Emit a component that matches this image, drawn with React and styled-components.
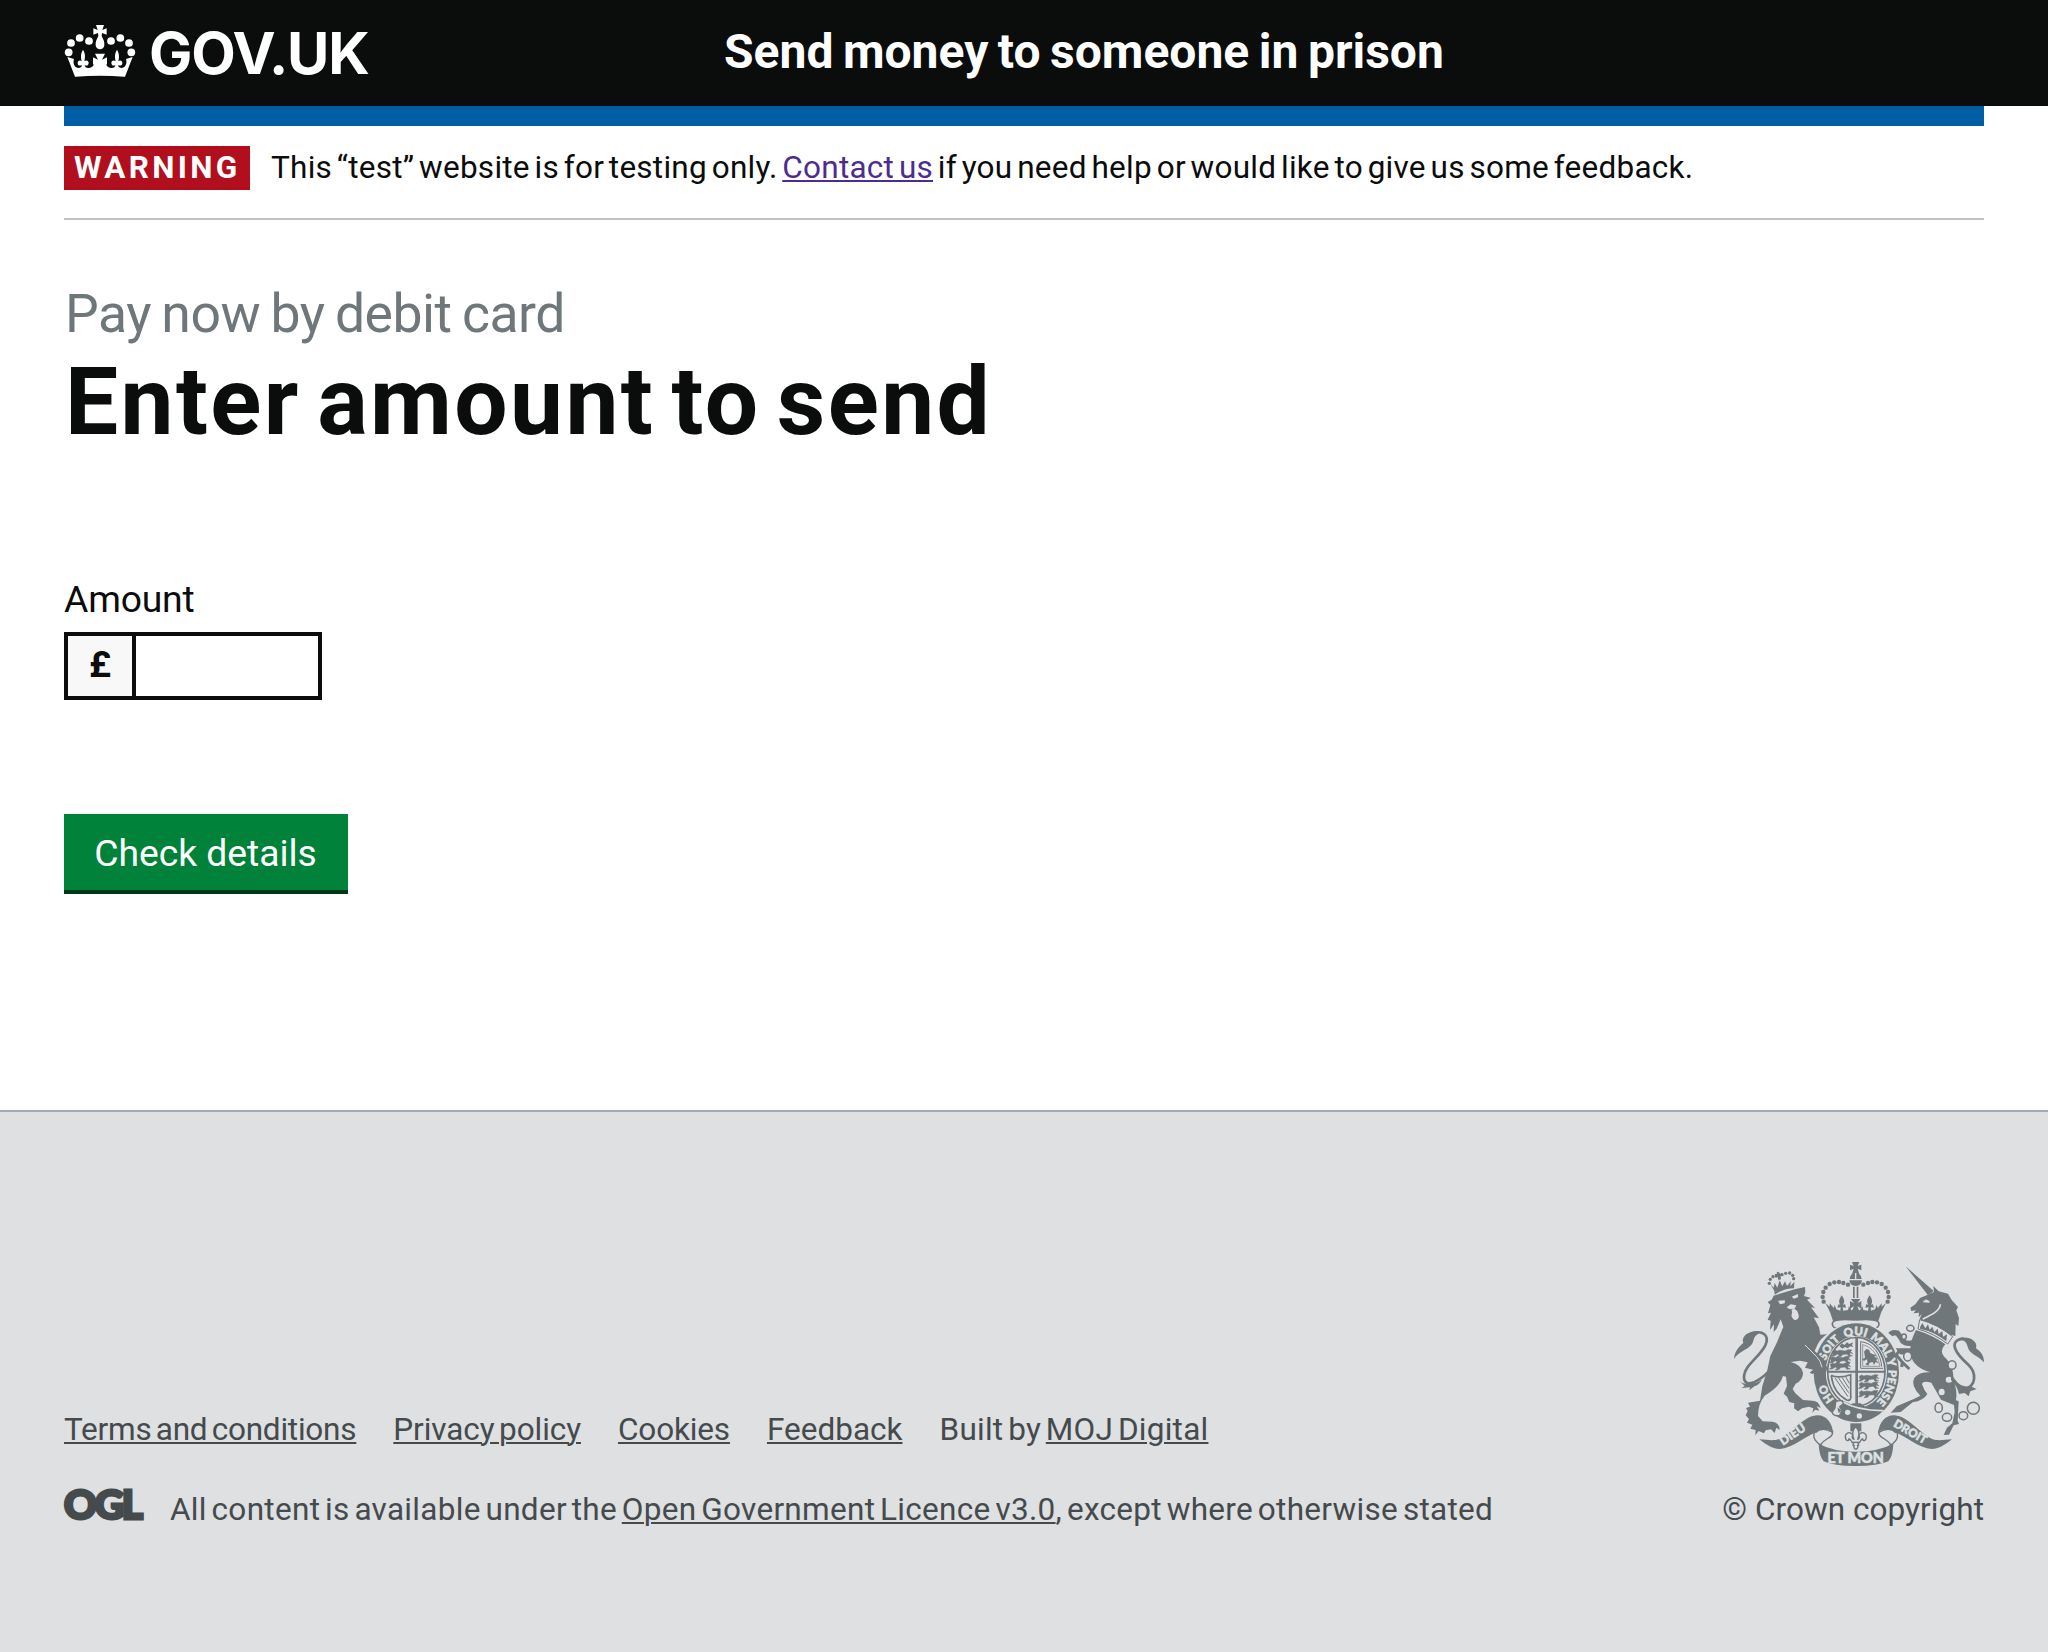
import React from 'react';
import styled, { createGlobalStyle } from 'styled-components';

const ink = '#0b0c0c';
const footerInk = '#454a4d';
const crestInk = '#6f777b';
const footerBg = '#dee0e2';

const GlobalStyle = createGlobalStyle`
  *, *::before, *::after { box-sizing: border-box; }
  body {
    margin: 0;
    background: #fff;
    color: ${ink};
    font-family: Roboto, "Liberation Sans", sans-serif;
    font-kerning: normal;
  }
`;

const Page = styled.div`
  display: flex;
  flex-direction: column;
  height: 1652px;
  overflow: hidden;
`;

const Container = styled.div`
  margin: 0 64px;
`;

const Header = styled.header`
  display: flex;
  flex: none;
  height: 106px;
  padding: 21px 64px 0;
  background: ${ink};
  color: #fff;
`;

const HomeLink = styled.a`
  display: flex;
  align-items: flex-start;
  width: 660px;
  color: inherit;
  text-decoration: none;
`;

const CrownIcon = styled.svg`
  width: 72px;
  height: 53px;
  margin-top: 3px;
`;

const LogoType = styled.span`
  margin-left: 13px;
  font: 700 57.8px/64px Inter, "Liberation Sans", sans-serif;
  letter-spacing: -1.1px;
`;

const ServiceName = styled.span`
  font-size: 48px;
  font-weight: 700;
  line-height: 61px;
  letter-spacing: 0;
  word-spacing: -2.4px;
`;

const BlueBar = styled.div`
  height: 20px;
  background: #005ea5;
`;

const PhaseBanner = styled.div`
  display: flex;
  height: 94px;
  padding-top: 20px;
  border-bottom: 2px solid #bfc1c3;
`;

const PhaseTag = styled.strong`
  flex: none;
  width: 186px;
  height: 44px;
  padding-left: 10px;
  background: #b10e1e;
  color: #fff;
  font-size: 31.5px;
  line-height: 44px;
  letter-spacing: 3.3px;
`;

const PhaseText = styled.p`
  margin: 0 0 0 21px;
  font-size: 31.5px;
  line-height: 44px;
  letter-spacing: 0.25px;
  word-spacing: -3.3px;
`;

const TextLink = styled.a`
  color: ${(p) => p.$color || 'inherit'};
  text-decoration: underline;
  text-decoration-thickness: 2px;
  text-underline-offset: 2px;
`;

const Heading = styled.h1`
  display: flex;
  flex-direction: column;
  margin: 64px 0 0;
  padding-left: 1px;
  font-size: 94.5px;
  font-weight: 700;
  line-height: 100px;
  letter-spacing: 2.4px;
  word-spacing: -9.5px;
`;

const Caption = styled.span`
  margin-bottom: 8px;
  color: #6f777b;
  font-size: 53.5px;
  font-weight: 400;
  line-height: 60px;
  letter-spacing: -0.5px;
  word-spacing: -2.4px;
`;

const Form = styled.form`
  display: flex;
  flex-direction: column;
  align-items: flex-start;
  margin-top: 122px;
`;

const Label = styled.label`
  margin-bottom: 8px;
  font-size: 37.3px;
  line-height: 50px;
  letter-spacing: -0.2px;
`;

const AmountField = styled.div`
  display: flex;
  width: 258px;
  height: 68px;
  border: 4px solid ${ink};
`;

const Prefix = styled.span`
  width: 68px;
  border-right: 4px solid ${ink};
  background: #f8f8f8;
  font-size: 37.3px;
  font-weight: 700;
  line-height: 57px;
  text-align: center;
`;

const AmountInput = styled.input`
  flex: 1;
  min-width: 0;
  border: 0;
  background: #fff;
  font: inherit;
`;

const SubmitButton = styled.button`
  width: 284px;
  height: 80px;
  margin-top: 114px;
  padding: 2px 1px 0 0;
  border: 0;
  border-bottom: 4px solid #003618;
  background: #00823b;
  color: #fff;
  font: 400 37.3px/74px Roboto, "Liberation Sans", sans-serif;
  letter-spacing: -0.05px;
`;

const Footer = styled.footer`
  display: flex;
  flex: 1;
  align-items: flex-end;
  justify-content: space-between;
  margin-top: 216px;
  padding: 0 64px 122px;
  border-top: 2px solid #a1acb2;
  background: ${footerBg};
  color: ${footerInk};
  font-size: 31.5px;
  line-height: 40px;
`;

const FooterLinks = styled.ul`
  display: flex;
  gap: 37px;
  margin: 0 0 40px;
  padding: 0;
  list-style: none;
`;

const FooterItem = styled.li`
  letter-spacing: ${(p) => p.$track}px;
  word-spacing: -3.3px;
  white-space: nowrap;
`;

const Licence = styled.div`
  display: flex;
`;

const OglMark = styled.span`
  width: 106px;
  margin-top: -6px;
  font: 900 40.5px/40px Lato, "Liberation Sans", sans-serif;
  letter-spacing: -2.2px;
  -webkit-text-stroke: 3px ${footerInk};
`;

const LicenceText = styled.span`
  letter-spacing: 0.3px;
  word-spacing: -3.3px;
`;

const Copyright = styled.a`
  display: flex;
  flex-direction: column;
  align-items: flex-end;
  gap: 24px;
  letter-spacing: 0.05px;
`;

const CrestArt = styled.svg`
  width: 250px;
  height: 204px;
  overflow: visible;
`;

const CrestWord = styled.text`
  fill: ${footerBg};
  stroke: ${footerBg};
  stroke-width: 1.6px;
  font-family: Lato, "Liberation Sans", sans-serif;
  font-weight: 900;
  font-size: ${(p) => p.$size}px;
`;

const crownHalf =
  'M132 180 H57 L34 121 L54 127 C50 140 55 152 66 154 C74 154 79 150 77 145 C72 149 64 146 65 138 C66 131 73 129 77 134 C74 120 74 111 81 99 C88 111 88 120 85 134 C89 129 97 131 98 138 C98 146 91 149 86 145 C86 151 91 155 99 154 C108 153 113 148 113 143 L111 143 V122 L126 129 L117 111 H132 Z';

function Crown() {
  return (
    <CrownIcon viewBox="24 22 216 159" fill="#fff" aria-hidden="true">
      {[[38, 107], [45, 79], [71, 64], [99, 73], [165, 73], [193, 64], [219, 79], [226, 107]].map(([x, y]) => (
        <circle key={x} cx={x} cy={y} r="11.6" />
      ))}
      <path d="M120 25 H144 L139 40 L152 35 V54 L138 49 L137 58 C142 68 146 76 145 85 A13 13 0 0 1 119 85 C118 76 122 68 127 58 L126 49 L112 54 V35 L125 40 Z" />
      <path d={crownHalf} />
      <path d={crownHalf} transform="translate(264 0) scale(-1 1)" />
      <path d="M59 181 Q132 173 205 181 Z" fill={ink} />
    </CrownIcon>
  );
}

const beads = [[444, 134], [430, 129], [417, 126], [403, 127], [389, 132], [377, 143], [370, 156], [368, 171], [371, 185]];

function CrownSide() {
  return (
    <g>
      {beads.map(([x, y]) => (
        <circle key={x} cx={x} cy={y} r="6.6" />
      ))}
      <path d="M468 240 Q430 238 399 243 Q392 215 376 189 L389 200 L389 190 L401 204 L404 195 L409 208 L421 212 L422 202 L412 203 L416 192 L421 195 C414 184 419 176 425 166 C432 176 436 184 429 195 L435 192 L438 203 L428 202 L430 212 L444 210 L447 198 L454 211 H468 Z" />
      <path d="M453 177 H468 V213 H456 L462 199 L450 206 V183 L462 190 Z" />
      <path d="M459 140 h5 v34 h-5z" />
      <path d="M467 240 C420 236 396 240 397 252 C398 260 403 264 410 265" fill="none" stroke={crestInk} strokeWidth="5" />
    </g>
  );
}

function RibbonSide() {
  return (
    <g>
      <path d="M178 598 C205 600 222 603 238 597 C279 576 309 530 350 526 C381 525 396 550 399 576 C388 567 366 560 344 578 C312 594 289 612 262 622 C232 634 212 624 178 598 Z" />
      <g fill="none" stroke={crestInk} strokeWidth="4">
        <path d="M344 576 C335 594 350 609 366 617" />
        <path d="M398 572 C401 596 373 593 362 614" />
        <path d="M346 578 C360 564 378 565 398 577" />
      </g>
    </g>
  );
}

function Fleur() {
  return (
    <g fill={footerBg} stroke={crestInk} strokeWidth="4" strokeLinejoin="round">
      <path d="M451 550 h33 v24 h-33z" fill={crestInk} stroke="none" />
      <path d="M467 560 C455 574 457 584 462 598 C458 598 455 592 458 584 C446 570 431 584 438 598 C441 604 448 603 446 597 C455 596 452 608 461 610 L459 616 L463 617 A6 6 0 1 0 472 617 L476 616 L474 610 C483 608 480 596 489 597 C487 603 494 604 497 598 C504 584 489 570 477 584 C480 592 477 598 473 598 C478 584 480 574 467 560 Z" />
      <path d="M456 607 h23" />
    </g>
  );
}

const miniLion = 'M0 4 l5 -4 6 3 6 -2 12 2 8 -4 8 1 -3 4 5 6 -6 -3 -1 6 6 3 -8 1 -4 -6 -10 1 -4 6 -9 1 5 -5 -4 -3 -7 5 -7 1 4 -5 z';

function Garter() {
  return (
    <g>
      <ellipse cx="469" cy="398" rx="132" ry="152" fill={footerBg} />
      <ellipse cx="469" cy="398" rx="128" ry="148" />
      <ellipse cx="469" cy="396" rx="92" ry="108" fill={footerBg} />
      <ellipse cx="469" cy="395" rx="86" ry="103" fill="none" stroke={crestInk} strokeWidth="5" />
      <path d="M466 292 h8 v205 h-8z M383 392 h172 v6 h-172z" />
      {[[397, 330], [391, 350], [391, 369], [478, 405], [478, 427], [478, 452]].map(([x, y], i) => (
        <g key={i} transform={`translate(${x} ${y}) scale(${i < 3 ? 1.3 : 1.25} 1.1)`}>
          <path d={miniLion} stroke={crestInk} strokeWidth="1.5" />
        </g>
      ))}
      <path d="M418 318 l8 -8 7 5 8 -8 7 5 11 -5 -3 8 4 6 -9 -2 -8 6 -8 -4 -8 5z" />
      <g fill="none" stroke={crestInk}>
        <path d="M482 305 V385 H549 M482 305 C520 308 543 345 545 380" strokeWidth="3" />
        <path d="M488 314 V379 H540 C534 346 518 322 488 314" strokeWidth="2" />
        <path d="M393 406 C405 412 428 412 452 404 V466 M394 408 C398 440 414 466 440 480 C450 484 455 475 452 464" strokeWidth="5" />
        <path d="M405 414 L444 470 M415 413 L446 458 M426 412 L447 445 M437 410 L448 430" strokeWidth="3" />
      </g>
      <path d="M492 335 l7 -8 9 3 2 8 9 5 10 2 -6 6 10 3 -4 7 8 10 -10 -5 -5 9 -4 -9 -9 2 -4 9 -9 -4 7 -7 -3 -8 -8 5 -6 -5 9 -5 -1 -8z" />
      <path d="M458 490 H482 L496 502 L446 499 Z" />
      <path d="M398 486 L424 481 Q470 504 545 507 L540 520 Q500 552 445 540 L398 524 Z" />
      <path id="garterPath" d="M373 398 A96 112 0 0 1 565 398 A96 112 0 0 1 373 398" fill="none" />
      {[['SOIT', 36], ['QUI', 128], ['MAL', 205], ['Y', 287], ['PENSE', 319], ['HO', 566]].map(([word, offset]) => (
        <CrestWord key={word} $size={word.length > 3 || word === 'HO' ? 33.5 : 35}>
          <textPath href="#garterPath" startOffset={offset}>{word}</textPath>
        </CrestWord>
      ))}
      <path d="M424 484 Q475 513 550 512" fill="none" stroke={footerBg} strokeWidth="5" />
      <path d="M407 485 Q432 476 429 492 L419 500 L426 511 L419 526 Q398 530 397 516 L405 504 Z" fill={footerBg} stroke={crestInk} strokeWidth="4" />
      <path d="M412 502 L424 511 L416 520 Z" />
      <circle cx="443" cy="517" r="8" fill={footerBg} />
      <circle cx="478" cy="528" r="8" fill={footerBg} />
    </g>
  );
}

function Lion() {
  return (
    <g>
      <path d="M223 153 L211 132 L221 143 L224 129 L232 143 L239 121 L247 139 L255 124 L261 138 L273 123 L270 139 L283 126 L282 145 Q252 145 224 164 Z" />
      {[[208, 130], [211, 118], [219, 110], [229, 108], [246, 104], [257, 100], [269, 99], [278, 106], [281, 116]].map(([x, y]) => (
        <circle key={x} cx={x} cy={y} r="5" />
      ))}
      <path d="M231 95 l6 2 3 5 5 -3 3 7 -6 2 1 10 -8 2 -2 -11 -7 1 -2 -7 6 -1z" />
      <path d="M203 186 L215 179 L221 167 L287 147 L315 141 L316 157 L312 168 L333 174 L321 179 L345 204 L333 202 L357 235 L341 232 L357 262 L361 284 L381 283 Q363 294 352 315 L344 333 L367 353 L382 384 L377 400 L374 422 L366 411 L352 423 L356 409 L343 412 L349 397 L337 402 L329 398 L339 389 L315 383 L323 367 L300 362 L272 366 Q305 375 309 398 Q310 420 287 431 L278 447 L286 460 L309 480 L337 482 Q356 482 362 504 L350 498 L358 512 L345 509 L337 519 L340 505 L327 500 L306 505 L294 514 L282 505 L283 490 L268 486 L261 470 L251 461 L261 438 L258 410 L249 408 Q241 439 194 467 Q174 491 174 528 L188 544 L218 545 Q239 549 239 570 L229 563 L224 579 L213 568 L197 571 L192 580 L176 573 L166 586 L167 570 L151 566 L157 554 L141 548 L147 537 L137 526 L143 513 L138 504 L150 500 L144 488 L180 482 L187 438 L202 390 L211 348 L231 307 L250 260 L242 238 L230 266 L221 276 L222 253 L210 270 L212 242 L203 239 L213 218 L204 220 L211 195 Z" />
      <g fill={footerBg}>
        <path d="M234 182 L255 181 L254 190 L240 193 Z M275 170 L294 162 L294 172 L282 176 Z M260 202 L272 193 L289 196 L284 206 L268 207 Z M274 209 C282 203 294 209 296 226 C299 239 283 246 277 233 C270 223 281 220 274 209 Z" />
      </g>
      <path d="M315 315 L350 350 Q362 362 366 382" fill="none" stroke={footerBg} strokeWidth="3" />
      <path d="M154 281 C190 268 209 288 196 316 C178 352 134 376 132 408 C130 443 166 434 206 395" fill="none" stroke={crestInk} strokeWidth="8" />
      <path d="M175 273 C140 272 123 293 130 309 C115 320 103 338 102 357 C115 335 140 331 153 316 C164 304 158 289 175 282 Z M119 423 Q132 436 147 429 Q168 434 187 417 Q176 437 163 439 L148 451 L150 442 L124 444 L134 438 Z" />
    </g>
  );
}

function Unicorn() {
  const ring = { fill: footerBg, stroke: crestInk, strokeWidth: 4.5 };
  return (
    <g>
      <path d="M617 79 L701 153 L684 166 Z" />
      <path d="M684 164 L702 155 L700 138 L716 154 L744 161 L755 180 L774 201 L769 211 L777 234 L775 258 L767 252 L766 288 L750 284 L659 237 L665 222 L656 232 L657 218 L640 220 L648 211 L634 213 L631 203 L646 193 L660 174 Z" />
      <path d="M721 193 C720 214 691 226 668 237 M670 184 L688 186 L676 180" fill="none" stroke={footerBg} strokeWidth="5" />
      <path d="M659 239 Q712 252 758 290 L743 312 Q703 281 654 267 Z" fill={footerBg} stroke={crestInk} strokeWidth="3" />
      <path d="M660 262 L667 249 L676 265 L684 253 L689 269 L697 260 L703 276 L713 266 L716 282 L727 273 L729 290 L741 283 L739 304 Q705 276 660 266 Z" />
      <path d="M648 270 Q700 286 736 313 Q714 337 739 356 Q762 377 760 422 Q773 449 768 481 L776 484 L773 542 L777 552 L761 556 L747 584 L731 585 L741 563 L757 550 L764 517 L762 495 L723 479 L694 428 Q667 421 666 433 Q672 451 682 462 Q671 482 638 487 L602 516 L572 518 L590 499 L643 476 L661 467 Q631 436 643 413 Q660 395 691 397 Q641 383 632 346 L600 343 L587 325 L631 325 Q631 303 648 270 Z" />
      <path d="M637 309 Q609 314 604 295 L592 279 Q577 276 571 284" fill="none" stroke={crestInk} strokeWidth="16" />
      <path d="M622 340 L598 332 L589 345 L607 367 L628 387 M607 367 L605 381" fill="none" stroke={crestInk} strokeWidth="9" />
      <ellipse cx="631" cy="265" rx="11" ry="9" {...ring} />
      <ellipse cx="612" cy="290" rx="7" ry="8" {...ring} />
      <ellipse cx="623" cy="349" rx="12" ry="14" {...ring} />
      <ellipse cx="756" cy="375" rx="12" ry="13" {...ring} />
      <ellipse cx="747" cy="419" rx="10" ry="9" fill={footerBg} />
      <ellipse cx="725" cy="456" rx="9" ry="10" fill={footerBg} />
      <ellipse cx="716" cy="503" rx="11" ry="14" {...ring} />
      <ellipse cx="741" cy="532" rx="14" ry="12" {...ring} />
      <ellipse cx="790" cy="527" rx="13" ry="12" {...ring} />
      <circle cx="820" cy="505" r="18" {...ring} />
      <path d="M790 448 C832 440 829 397 805 374 C767 341 742 302 790 296" fill="none" stroke={crestInk} strokeWidth="8" />
      <path d="M780 294 C808 288 835 304 828 325 C845 337 852 349 852 367 C837 347 807 343 803 320 C799 303 790 302 780 298 Z M753 400 Q774 438 794 439 L816 441 L830 447 L811 454 L806 469 L794 459 L777 462 Q772 438 753 420 Z" />
    </g>
  );
}

function Crest() {
  return (
    <CrestArt viewBox="102 66 750 612" fill={crestInk} aria-hidden="true">
      <path d="M456 66 H478 L473 78 L484 74 V91 L473 86 L477 99 H457 L461 86 L450 91 V74 L461 78 Z" />
      <path d="M465 99 H458 Q450 107 449 117 H465 Z M469 99 H476 Q484 107 485 117 H469 Z M448 121 H486 Q484 138 467 138 Q450 138 448 121 Z" />
      <CrownSide />
      <g transform="translate(934 0) scale(-1 1)"><CrownSide /></g>
      <Garter />
      <Lion />
      <Unicorn />
      <RibbonSide />
      <g transform="translate(934 0) scale(-1 1)"><RibbonSide /></g>
      <path d="M356 611 Q400 635 467 635 Q534 635 580 611 Q579 648 565 664 Q535 678 467 678 Q399 678 371 664 Q357 648 356 611 Z" />
      <Fleur />
      <CrestWord $size={36} transform="translate(249 617) rotate(-34)">DIEU</CrestWord>
      <CrestWord $size={35} transform="translate(578 558) rotate(30)">DROIT</CrestWord>
      <CrestWord $size={43} x="467" y="669" textAnchor="middle">ET MON</CrestWord>
    </CrestArt>
  );
}

export default function App() {
  return (
    <Page>
      <GlobalStyle />
      <Header>
        <HomeLink>
          <Crown />
          <LogoType>GOV.UK</LogoType>
        </HomeLink>
        <ServiceName>Send money to someone in prison</ServiceName>
      </Header>
      <Container>
        <BlueBar />
        <PhaseBanner>
          <PhaseTag>WARNING</PhaseTag>
          <PhaseText>
            This “test” website is for testing only. <TextLink $color="#4c2c92">Contact us</TextLink> if you need help or would like to give us some feedback.
          </PhaseText>
        </PhaseBanner>
        <Heading>
          <Caption>Pay now by debit card</Caption>
          Enter amount to send
        </Heading>
        <Form>
          <Label htmlFor="amount">Amount</Label>
          <AmountField>
            <Prefix>£</Prefix>
            <AmountInput id="amount" />
          </AmountField>
          <SubmitButton type="button">Check details</SubmitButton>
        </Form>
      </Container>
      <Footer>
        <div>
          <FooterLinks>
            <FooterItem $track={-0.22}><TextLink>Terms and conditions</TextLink></FooterItem>
            <FooterItem $track={-0.07}><TextLink>Privacy policy</TextLink></FooterItem>
            <FooterItem $track={-0.15}><TextLink>Cookies</TextLink></FooterItem>
            <FooterItem $track={0}><TextLink>Feedback</TextLink></FooterItem>
            <FooterItem $track={0.25}>Built by <TextLink>MOJ Digital</TextLink></FooterItem>
          </FooterLinks>
          <Licence>
            <OglMark>OGL</OglMark>
            <LicenceText>
              All content is available under the <TextLink>Open Government Licence v3.0</TextLink>, except where otherwise stated
            </LicenceText>
          </Licence>
        </div>
        <Copyright>
          <Crest />
          <span>© Crown copyright</span>
        </Copyright>
      </Footer>
    </Page>
  );
}
